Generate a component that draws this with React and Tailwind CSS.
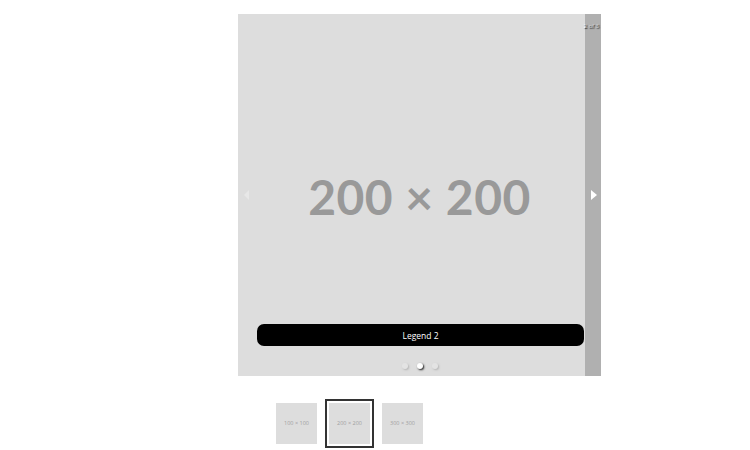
export default function App() {
  const thumbs = ["100 × 100", "200 × 200", "300 × 300"];
  return (
    <div className="w-[750px] h-[450px] bg-white overflow-hidden" style={{ fontFamily: '"Open Sans", "Liberation Sans", sans-serif' }}>
      <div className="ml-[238px] pt-[14px] w-[363px]">
        <div className="relative w-[363px] h-[362px] bg-[#dddddd] flex items-center justify-center">
          <span className="text-[#999999] text-[48px] font-bold leading-none tracking-[0.5px] mt-[3px]" style={{ fontFamily: 'Lato, "Open Sans", sans-serif' }}>200 × 200</span>
          <div className="absolute top-[9px] right-[2px] text-[6px] leading-none text-white" style={{ textShadow: "1px 1px 1px rgba(0,0,0,0.9)" }}>2 of 3</div>
          <div className="absolute left-0 top-0 bottom-0 w-[16px] flex items-center justify-center opacity-30">
            <div className="w-0 h-0 border-y-[5px] border-y-transparent border-r-[5px] border-r-white" />
          </div>
          <div className="absolute right-0 top-0 bottom-0 w-[16px] bg-black/20 flex items-center justify-center">
            <div className="w-0 h-0 border-y-[5px] border-y-transparent border-l-[6px] border-l-white ml-[1px]" />
          </div>
          <div className="absolute left-[19px] w-[327px] top-[310px] h-[22px] pt-[2px] rounded-[7px] bg-black flex items-center justify-center text-white text-[8.5px]">Legend 2</div>
          <div className="absolute left-0 right-0 top-[349px] flex justify-center gap-[9px]">
            <span className="w-[6px] h-[6px] rounded-full bg-white opacity-20 shadow-[1px_1px_2px_rgba(0,0,0,0.9)]" />
            <span className="w-[6px] h-[6px] rounded-full bg-white shadow-[1px_1px_2px_rgba(0,0,0,0.9)]" />
            <span className="w-[6px] h-[6px] rounded-full bg-white opacity-20 shadow-[1px_1px_2px_rgba(0,0,0,0.9)]" />
          </div>
        </div>
        <div className="ml-[34px] mt-[23px] flex gap-[4px]">
          {thumbs.map((t, i) => (
            <div key={t} className={"w-[49px] h-[49px] border-2 p-[2px] " + (i === 1 ? "border-[#333333]" : "border-white")}>
              <div className="w-full h-full bg-[#dddddd] flex items-center justify-center text-[5.5px] text-[#a0a0a0]">{t}</div>
            </div>
          ))}
        </div>
      </div>
    </div>
  );
}
